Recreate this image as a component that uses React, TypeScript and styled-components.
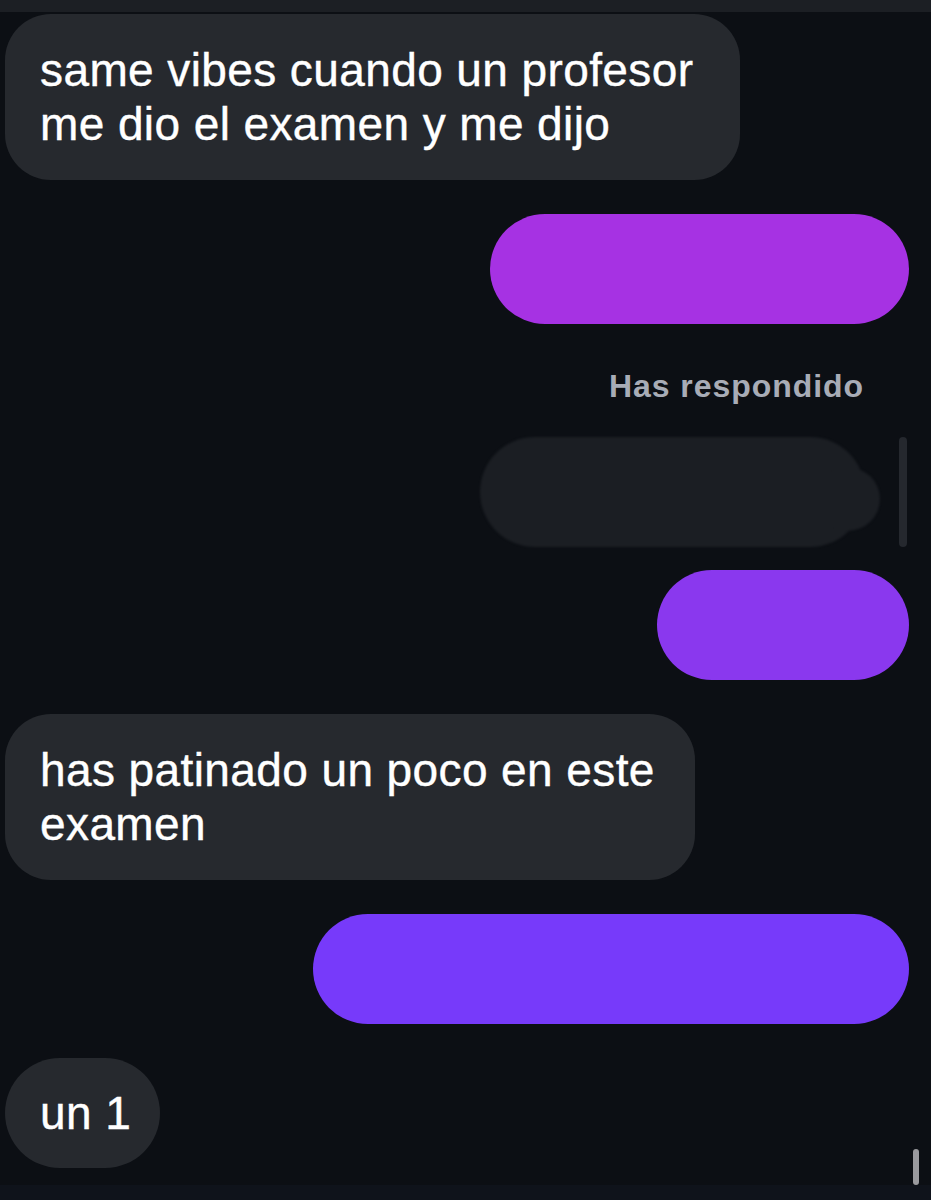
import React from "react";
import styled, { createGlobalStyle } from "styled-components";

const Global = createGlobalStyle`
  html, body { margin: 0; padding: 0; background: #0c0f14; }
  body { font-family: "Liberation Sans", Arial, sans-serif; }
`;

const Screen = styled.div`
  position: relative;
  width: 931px;
  height: 1200px;
  background: #0c0f14;
  overflow: hidden;
  display: flex;
  flex-direction: column;
`;

const TopBar = styled.div`
  height: 12px;
  background: #1c1f24;
  flex: none;
`;

const Thread = styled.div`
  display: flex;
  flex-direction: column;
  padding: 2px 22px 0 5px;
`;

const Row = styled.div<{ $out?: boolean; $gap: number }>`
  display: flex;
  justify-content: ${(p) => (p.$out ? "flex-end" : "flex-start")};
  margin-top: ${(p) => p.$gap}px;
`;

const TextBubble = styled.div<{ $round?: boolean; $w: number }>`
  width: ${(p) => p.$w}px;
  box-sizing: border-box;
  padding: ${(p) => (p.$round ? "28px 0 28px 35px" : "29px 0 29px 35px")};
  background: #26292e;
  border-radius: ${(p) => (p.$round ? 55 : 46)}px;
  color: #ffffff;
  font-size: 46px;
  line-height: 54px;
  letter-spacing: 0.4px;
  -webkit-text-stroke: 0.4px #ffffff;
`;

const SentBubble = styled.div<{ $w: number; $bg: string }>`
  width: ${(p) => p.$w}px;
  height: 110px;
  border-radius: 55px;
  background: ${(p) => p.$bg};
`;

const Label = styled.div`
  margin-top: 42px;
  padding-right: 45px;
  text-align: right;
  color: #a8acb6;
  font-size: 32px;
  line-height: 40px;
  font-weight: 700;
  letter-spacing: 0.95px;
`;

const ReplyGroup = styled.div`
  display: flex;
  align-items: stretch;
  gap: 34px;
  margin-top: 31px;
  margin-right: 2px;
  align-self: flex-end;
`;

const Quoted = styled.div`
  position: relative;
  width: 385px;
  height: 110px;
  border-radius: 55px;
  background: #1b1e23;
  filter: blur(1px);
  &::after {
    content: "";
    position: absolute;
    right: -15px;
    top: 30px;
    width: 66px;
    height: 64px;
    border-radius: 50%;
    background: #1b1e23;
  }
`;

const ReplyBar = styled.div`
  width: 8px;
  border-radius: 4px;
  background: #25282e;
`;

const BottomBar = styled.div`
  position: absolute;
  left: 0;
  right: 0;
  bottom: 0;
  height: 15px;
  background: #0f131b;
`;

const ScrollThumb = styled.div`
  position: absolute;
  right: 12px;
  bottom: 15px;
  width: 6px;
  height: 36px;
  border-radius: 3px;
  background: #9a9a9e;
`;

export default function App() {
  return (
    <>
      <Global />
      <Screen>
        <TopBar />
        <Thread>
          <Row $gap={0}>
            <TextBubble $w={735}>same vibes cuando un profesor me dio el examen y me dijo</TextBubble>
          </Row>
          <Row $out $gap={34}>
            <SentBubble $w={419} $bg="#a632e3" />
          </Row>
          <Label>Has respondido</Label>
          <ReplyGroup>
            <Quoted />
            <ReplyBar />
          </ReplyGroup>
          <Row $out $gap={23}>
            <SentBubble $w={252} $bg="#8a38ee" />
          </Row>
          <Row $gap={34}>
            <TextBubble $w={690}>has patinado un poco en este examen</TextBubble>
          </Row>
          <Row $out $gap={34}>
            <SentBubble $w={596} $bg="#773afa" />
          </Row>
          <Row $gap={34}>
            <TextBubble $round $w={155}>un 1</TextBubble>
          </Row>
        </Thread>
        <BottomBar />
        <ScrollThumb />
      </Screen>
    </>
  );
}
